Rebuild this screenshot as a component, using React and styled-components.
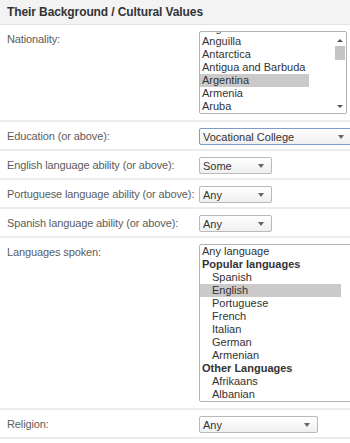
import React from "react";
import styled, { createGlobalStyle } from "styled-components";

const Global = createGlobalStyle`
  body {
    margin: 0;
    background: #fff;
    font-family: "Liberation Sans", Arial, sans-serif;
  }
`;

const Page = styled.div`
  width: 350px;
  overflow: hidden;
`;

const Header = styled.div`
  height: 24px;
  line-height: 24px;
  padding-left: 7px;
  background: #f3f3f3;
  border-bottom: 1px solid #e2e2e2;
  font-size: 12px;
  font-weight: bold;
  color: #333;
  letter-spacing: -0.1px;
`;

const Row = styled.div`
  display: flex;
  align-items: flex-start;
  padding: ${(p) => (p.$big ? "6px 0 6px" : "6px 0 4px")};
  border-bottom: 2px solid #ececec;
`;

const Label = styled.div`
  width: 199px;
  flex-shrink: 0;
  padding-left: 7px;
  box-sizing: border-box;
  font-size: 11px;
  line-height: 17px;
  letter-spacing: -0.12px;
  color: #5c5c5c;
  white-space: nowrap;
`;

const Select = styled.div`
  flex-shrink: 0;
  width: ${(p) => p.$w}px;
  height: 17px;
  box-sizing: border-box;
  display: flex;
  align-items: center;
  justify-content: space-between;
  padding: 0 7px 0 3px;
  border: 1px solid ${(p) => (p.$focus ? "#7d9ccb" : "#b9b9b9")};
  border-radius: 2px;
  background: linear-gradient(#ffffff, #efefef);
  font-size: 11px;
  color: #333;
`;

const Arrow = styled.span`
  width: 0;
  height: 0;
  border-left: 3.5px solid transparent;
  border-right: 3.5px solid transparent;
  border-top: 4px solid #666;
`;

const ListBox = styled.div`
  flex-shrink: 0;
  width: ${(p) => p.$w}px;
  height: ${(p) => p.$h}px;
  box-sizing: border-box;
  border: 1px solid #b3b3b3;
  border-radius: 2px;
  overflow: hidden;
  background: #fff;
  font-size: 11px;
  color: #333;
  display: flex;
`;

const Options = styled.div`
  margin-top: ${(p) => p.$offset || 0}px;
  ${(p) => (p.$fit ? "align-self: flex-start;" : "flex: 1; margin-right: 17px;")}
`;

const Option = styled.div`
  height: 13px;
  line-height: 13px;
  white-space: nowrap;
  padding-left: ${(p) => (p.$indent ? 12 : 2)}px;
  padding-right: 4px;
  font-weight: ${(p) => (p.$group ? "bold" : "normal")};
  background: ${(p) => (p.$selected ? "#cacaca" : "transparent")};
`;

const Scrollbar = styled.div`
  margin-left: auto;
  width: 13px;
  display: flex;
  flex-direction: column;
  align-items: center;
  padding: 7px 0 5px;
  box-sizing: border-box;
`;

const ScrollUp = styled.span`
  width: 0;
  height: 0;
  border-left: 3px solid transparent;
  border-right: 3px solid transparent;
  border-bottom: 3px solid #555;
`;

const ScrollDown = styled(ScrollUp)`
  margin-top: auto;
  border-bottom: none;
  border-top: 3px solid #555;
`;

const Thumb = styled.div`
  width: 10px;
  height: 14px;
  margin-top: 4px;
  background: #c4c4c4;
`;

const nationalities = ["Angola", "Anguilla", "Antarctica", "Antigua and Barbuda", "Argentina", "Armenia", "Aruba"];

const languages = [
  { t: "Any language" },
  { t: "Popular languages", group: true },
  { t: "Spanish", indent: true },
  { t: "English", indent: true, selected: true },
  { t: "Portuguese", indent: true },
  { t: "French", indent: true },
  { t: "Italian", indent: true },
  { t: "German", indent: true },
  { t: "Armenian", indent: true },
  { t: "Other Languages", group: true },
  { t: "Afrikaans", indent: true },
  { t: "Albanian", indent: true },
];

function Dropdown({ value, width, focus }) {
  return (
    <Select $w={width} $focus={focus}>
      <span>{value}</span>
      <Arrow />
    </Select>
  );
}

export default function App() {
  return (
    <Page>
      <Global />
      <Header>Their Background / Cultural Values</Header>

      <Row $big>
        <Label>Nationality:</Label>
        <ListBox $w={148} $h={83}>
          <Options $fit $offset={-10}>
            {nationalities.map((n) => (
              <Option key={n} $selected={n === "Argentina"}>{n}</Option>
            ))}
          </Options>
          <Scrollbar>
            <ScrollUp />
            <Thumb />
            <ScrollDown />
          </Scrollbar>
        </ListBox>
      </Row>

      <Row>
        <Label>Education (or above):</Label>
        <Dropdown value="Vocational College" width={153} focus />
      </Row>
      <Row>
        <Label>English language ability (or above):</Label>
        <Dropdown value="Some" width={73} />
      </Row>
      <Row>
        <Label>Portuguese language ability (or above):</Label>
        <Dropdown value="Any" width={73} />
      </Row>
      <Row>
        <Label>Spanish language ability (or above):</Label>
        <Dropdown value="Any" width={73} />
      </Row>

      <Row $big>
        <Label>Languages spoken:</Label>
        <ListBox $w={160} $h={158}>
          <Options>
            {languages.map((l) => (
              <Option key={l.t} $group={l.group} $indent={l.indent} $selected={l.selected}>
                {l.t}
              </Option>
            ))}
          </Options>
        </ListBox>
      </Row>

      <Row>
        <Label>Religion:</Label>
        <Dropdown value="Any" width={119} />
      </Row>
    </Page>
  );
}
